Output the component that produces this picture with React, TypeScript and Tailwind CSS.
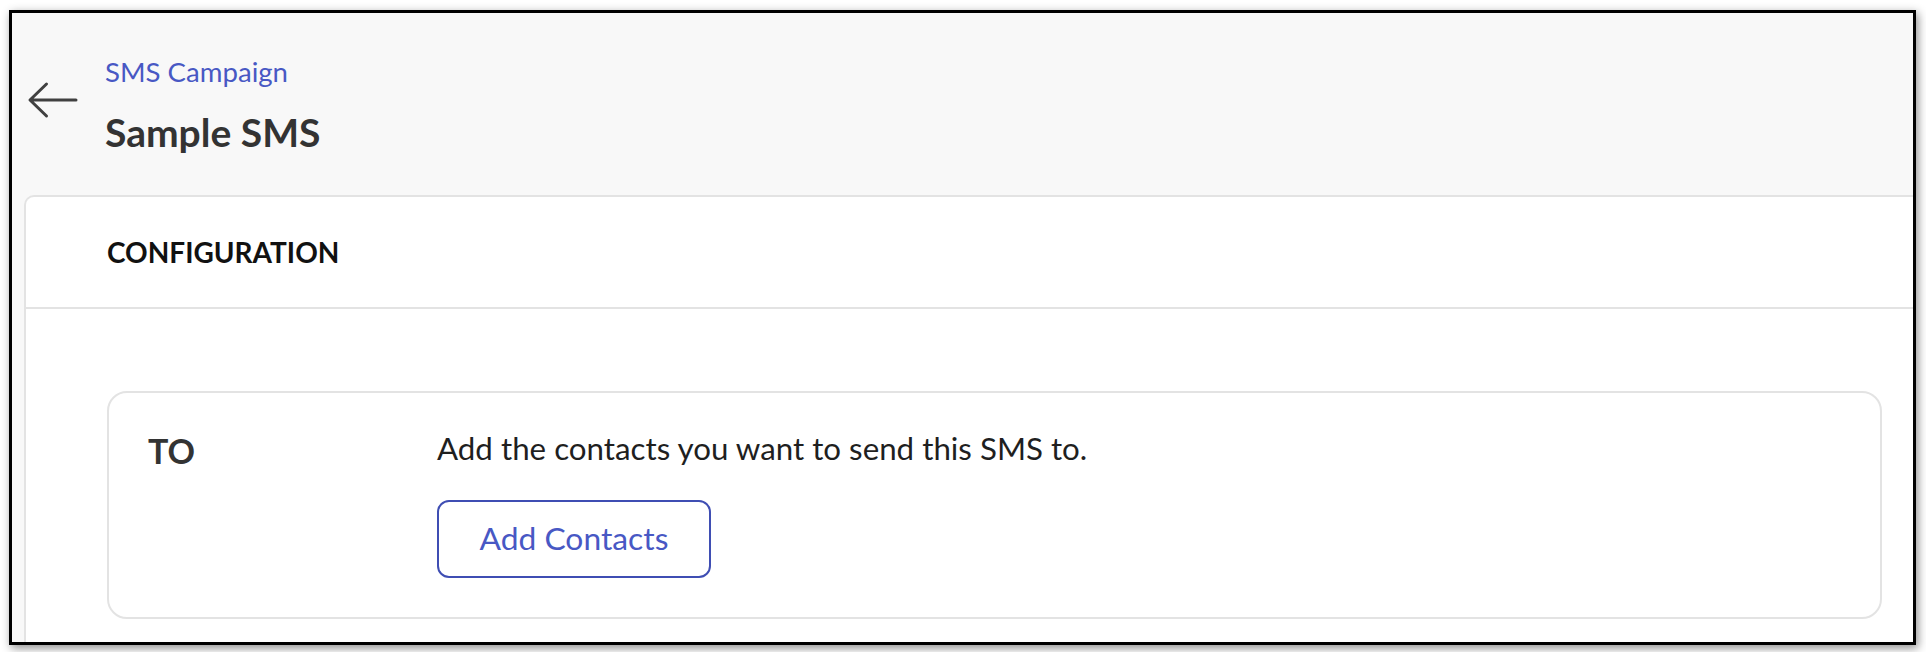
import React from 'react'

const font = { fontFamily: 'Lato, "Noto Sans", sans-serif' }

const BackArrow = () => (
    <svg width="52" height="38" viewBox="0 0 52 38" fill="none" className="shrink-0 mt-[26px]">
        <path d="M49 19 H3.5 M19.5 3 L3 19 L19.5 35" stroke="#404040" strokeWidth="3" strokeLinecap="round" strokeLinejoin="round" />
    </svg>
)

const App = () => {
    return (
        <div className="h-[652px] w-full overflow-hidden bg-white pt-[10px] pl-[9px]" style={font}>
            <div className="w-[1907px] h-[635px] border-[3px] border-black bg-[#f8f8f8] shadow-[2px_3px_9px_rgba(0,0,0,0.45)] flex flex-col overflow-hidden">
                {/* Page header */}
                <div className="h-[182px] shrink-0 flex pl-[15px] pt-[42px]">
                    <BackArrow />
                    <div className="ml-[26px] flex flex-col">
                        <a className="text-[27.6px] leading-[34px] text-[#4858c4]">SMS Campaign</a>
                        <h1 className="mt-[19px] text-[39px] leading-[49px] font-bold text-[#333333]">Sample SMS</h1>
                    </div>
                </div>

                {/* Main card */}
                <div className="ml-[12px] flex-1 bg-white border-l-2 border-t-2 border-[#e3e3e3] rounded-tl-[10px]">
                    <div className="h-[112px] flex items-center pl-[81px] border-b-2 border-[#e3e3e3]">
                        <h2 className="text-[28px] leading-[35px] font-bold text-[#111111]">CONFIGURATION</h2>
                    </div>

                    <div className="pt-[82px] pl-[81px] pr-[31px]">
                        <div className="border-2 border-[#e3e3e3] rounded-[20px] pt-[37px] pb-[39px] pl-[39px] flex">
                            <div className="w-[289px] shrink-0 text-[34px] leading-[41px] font-bold text-[#333333]">TO</div>
                            <div className="flex flex-col items-start">
                                <p className="text-[31.3px] leading-[36px] text-[#1f1f1f]">Add the contacts you want to send this SMS to.</p>
                                <button className="mt-[34px] w-[274px] h-[78px] border-2 border-[#3f4eb3] rounded-[12px] text-[31.8px] text-[#4858c4] bg-white">
                                    Add Contacts
                                </button>
                            </div>
                        </div>
                    </div>
                </div>
            </div>
        </div>
    )
}

export default App
